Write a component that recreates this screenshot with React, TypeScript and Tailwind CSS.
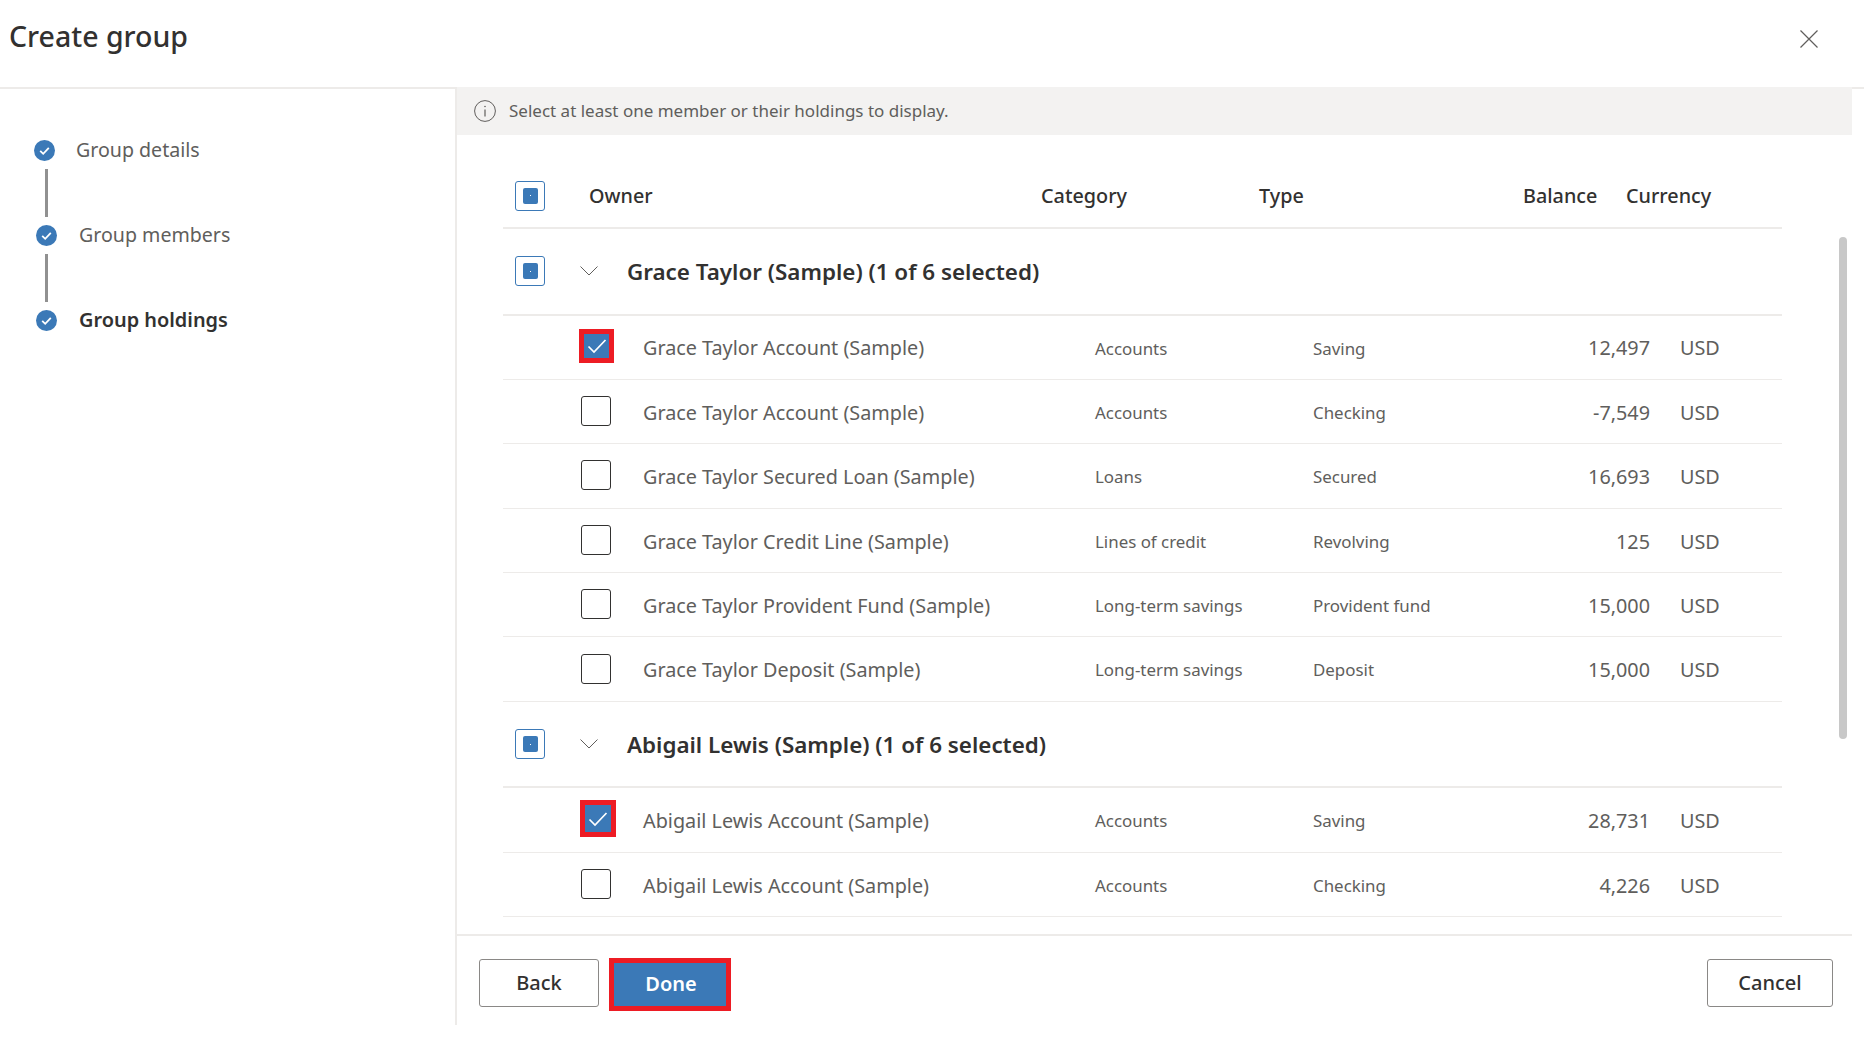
import React from 'react';

type Holding = { name: string; category: string; type: string; balance: string; checked?: boolean; bigMark?: boolean };

const graceRows: Holding[] = [
	{ name: 'Grace Taylor Account (Sample)', category: 'Accounts', type: 'Saving', balance: '12,497', checked: true },
	{ name: 'Grace Taylor Account (Sample)', category: 'Accounts', type: 'Checking', balance: '-7,549' },
	{ name: 'Grace Taylor Secured Loan (Sample)', category: 'Loans', type: 'Secured', balance: '16,693' },
	{ name: 'Grace Taylor Credit Line (Sample)', category: 'Lines of credit', type: 'Revolving', balance: '125' },
	{ name: 'Grace Taylor Provident Fund (Sample)', category: 'Long-term savings', type: 'Provident fund', balance: '15,000' },
	{ name: 'Grace Taylor Deposit (Sample)', category: 'Long-term savings', type: 'Deposit', balance: '15,000' },
];

const abigailRows: Holding[] = [
	{ name: 'Abigail Lewis Account (Sample)', category: 'Accounts', type: 'Saving', balance: '28,731', checked: true, bigMark: true },
	{ name: 'Abigail Lewis Account (Sample)', category: 'Accounts', type: 'Checking', balance: '4,226' },
];

function StepIcon() {
	return (
		<svg width="21" height="21" viewBox="0 0 21 21" className="shrink-0">
			<circle cx="10.5" cy="10.5" r="10.5" fill="#3b79b7" />
			<path d="M6.2 10.8l3 3 5.6-6" fill="none" stroke="#fff" strokeWidth="1.8" />
		</svg>
	);
}

function PartialBox() {
	return (
		<div className="w-[30px] h-[30px] rounded-[3px] border border-[#3b79b7] flex items-center justify-center bg-white">
			<div className="w-[15px] h-[16px] rounded-[2px] bg-[#3b79b7] flex items-center justify-center">
				<div className="w-px h-px bg-white" />
			</div>
		</div>
	);
}

function RowBox({ checked, bigMark }: { checked?: boolean; bigMark?: boolean }) {
	if (checked) {
		return (
			<div
				className={
					bigMark
						? 'w-[36px] h-[37px] -ml-[1px] -mt-[5px] border-[5px] border-[#ed1c24] bg-[#3b79b7] flex items-center justify-center'
						: 'w-[35px] h-[34px] -ml-[2px] -mt-[4px] border-[5px] border-[#ed1c24] bg-[#3b79b7] flex items-center justify-center'
				}
			>
				<svg width="20" height="16" viewBox="0 0 20 16">
					<path d="M1.5 8.5L7 14 18.5 2" fill="none" stroke="#fff" strokeWidth="1.7" />
				</svg>
			</div>
		);
	}
	return <div className="w-[30px] h-[30px] -mt-[3px] rounded-[3px] border border-[#323130] bg-white" />;
}

function GroupRow({ title }: { title: string }) {
	return (
		<div className="h-[86.5px] flex items-center border-b-2 border-[#edebe9]">
			<div className="ml-[12px] w-[65px]">
				<PartialBox />
			</div>
			<svg width="18" height="10" viewBox="0 0 18 10" className="shrink-0">
				<path d="M.5.5L9 9l8.5-8.5" fill="none" stroke="#605e5c" strokeWidth="1" />
			</svg>
			<div className="ml-[29px] pt-[2px] text-[22.4px] font-semibold text-[#323130]">{title}</div>
		</div>
	);
}

function HoldingRow({ row }: { row: Holding }) {
	return (
		<div className="h-[64.4px] pt-[2px] flex items-center border-b border-[#edebe9] text-[#605e5c]">
			<div className="ml-[78px] w-[62px] shrink-0">
				<RowBox checked={row.checked} bigMark={row.bigMark} />
			</div>
			<div className="w-[452px] shrink-0 text-[19.8px]">{row.name}</div>
			<div className="w-[218px] shrink-0 text-[16.9px]">{row.category}</div>
			<div className="w-[190px] shrink-0 text-[16.9px]">{row.type}</div>
			<div className="w-[147px] shrink-0 text-[19.8px] text-right">{row.balance}</div>
			<div className="ml-[30px] text-[19.8px]">USD</div>
		</div>
	);
}

export default function App() {
	return (
		<div className="w-[1864px] h-[1062px] bg-white overflow-hidden font-['Noto_Sans',sans-serif] text-[#323130]">
			<header className="h-[89px] flex items-start justify-between border-b-2 border-[#edebe9]">
				<h1 className="ml-[9px] mt-[15px] text-[28.5px] font-medium text-[#323130]">Create group</h1>
				<svg width="18" height="18" viewBox="0 0 18 18" className="mt-[30px] mr-[46px]">
					<path d="M.5.5l17 17M17.5.5l-17 17" stroke="#605e5c" strokeWidth="1.2" fill="none" />
				</svg>
			</header>

			<div className="h-[938px] flex -mt-[2px]">
				<aside className="w-[457px] shrink-0 border-r-2 border-[#edebe9] pl-[36px] pt-[53px]">
					<div className="flex items-center h-[21px] -ml-[2px] gap-[21px] text-[19.6px] text-[#605e5c]">
						<StepIcon />
						<span className="-mt-[2px]">Group details</span>
					</div>
					<div className="ml-[9px] mt-[8px] mb-[8px] w-[3px] h-[48px] bg-[#919191]" />
					<div className="flex items-center h-[21px] gap-[22px] text-[19.6px] text-[#605e5c]">
						<StepIcon />
						<span className="-mt-[2px]">Group members</span>
					</div>
					<div className="ml-[9px] mt-[8px] mb-[8px] w-[3px] h-[48px] bg-[#919191]" />
					<div className="flex items-center h-[21px] gap-[22px] text-[19.9px] font-semibold text-[#323130]">
						<StepIcon />
						<span className="-mt-[2px]">Group holdings</span>
					</div>
				</aside>

				<main className="w-[1395px] flex flex-col">
					<div className="h-[48px] shrink-0 bg-[#f3f2f1] flex items-center pl-[17px] gap-[13px] text-[17px] text-[#605e5c]">
						<svg width="22" height="22" viewBox="0 0 22 22" className="shrink-0">
							<circle cx="11" cy="11" r="10.4" fill="none" stroke="#605e5c" strokeWidth="1" />
							<path d="M11 9.5V16.5" stroke="#605e5c" strokeWidth="1.2" />
							<circle cx="11" cy="6.5" r=".8" fill="#605e5c" />
						</svg>
						<span>Select at least one member or their holdings to display.</span>
					</div>

					<div className="relative flex-1 overflow-hidden pl-[46px] pr-[70px]">
						<div className="h-[94px] pt-[29px] flex items-center border-b-2 border-[#edebe9] text-[19.8px] font-medium">
							<div className="ml-[12px] w-[74px]">
								<PartialBox />
							</div>
							<div className="w-[452px]">Owner</div>
							<div className="w-[218px]">Category</div>
							<div className="w-[264px]">Type</div>
							<div className="w-[103px]">Balance</div>
							<div>Currency</div>
						</div>

						<GroupRow title="Grace Taylor (Sample) (1 of 6 selected)" />
						{graceRows.map((row, i) => (
							<HoldingRow key={i} row={row} />
						))}
						<GroupRow title="Abigail Lewis (Sample) (1 of 6 selected)" />
						{abigailRows.map((row, i) => (
							<HoldingRow key={i} row={row} />
						))}
						<div className="h-[64.4px] pt-[2px] flex items-center">
							<div className="ml-[78px]">
								<RowBox />
							</div>
						</div>

						<div className="absolute right-[5px] top-[102px] w-[8px] h-[502px] rounded-full bg-[#c8c8c8]" />
					</div>

					<div className="h-[91px] shrink-0 border-t-2 border-[#edebe9] flex items-start pt-[23px] pl-[22px] pr-[19px]">
						<button className="w-[120px] h-[48px] rounded-[3px] border border-[#8a8886] text-[20px] font-medium">Back</button>
						<button className="ml-[10px] -mt-[1px] w-[122px] h-[53px] pb-[2px] pl-[2px] border-[5px] border-[#ed1c24] bg-[#3b79b7] text-white text-[20px] font-semibold">Done</button>
						<button className="ml-auto w-[126px] h-[48px] rounded-[3px] border border-[#8a8886] text-[20px] font-medium">Cancel</button>
					</div>
				</main>
			</div>
		</div>
	);
}
